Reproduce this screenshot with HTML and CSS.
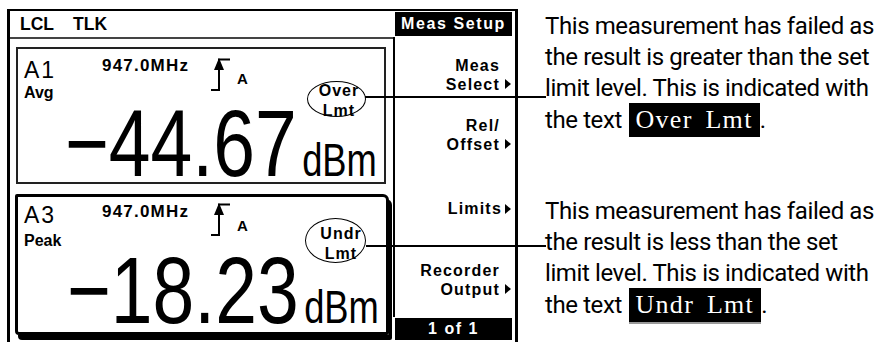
FILE: index.html
```html
<!DOCTYPE html>
<html lang="en">
<head>
<meta charset="utf-8">
<title>Meas Setup - limit indication</title>
<link rel="stylesheet" href="styles.css">
</head>
<body>
<div class="page">
  <div class="screen">
    <div class="main">
      <div class="status"><span>LCL</span><span>TLK</span></div>
      <div class="win win-a">
        <div class="win-head">
          <div class="chan"><div class="chan-id">A1</div><div class="chan-mode">Avg</div></div>
          <div class="freq">947.0MHz</div>
          <div class="trig">
            <svg width="20" height="33" viewBox="0 0 20 33"><path d="M0 32H8V1.5H19" fill="none" stroke="#000" stroke-width="2"/><path d="M8 0L3 12H13Z" fill="#000"/></svg>
            <span class="trig-src">A</span>
          </div>
          <div class="flag">Over<br>Lmt</div>
        </div>
        <div class="reading"><span class="val">&minus;44.67</span><span class="unit">dBm</span></div>
      </div>
      <div class="win win-b">
        <div class="win-head">
          <div class="chan"><div class="chan-id">A3</div><div class="chan-mode">Peak</div></div>
          <div class="freq">947.0MHz</div>
          <div class="trig">
            <svg width="20" height="33" viewBox="0 0 20 33"><path d="M0 32H8V1.5H19" fill="none" stroke="#000" stroke-width="2"/><path d="M8 0L3 12H13Z" fill="#000"/></svg>
            <span class="trig-src">A</span>
          </div>
          <div class="flag">Undr<br>Lmt</div>
        </div>
        <div class="reading"><span class="val">&minus;18.23</span><span class="unit">dBm</span></div>
      </div>
    </div>
    <div class="keys">
      <div class="menu-title">Meas Setup</div>
      <div class="keylist">
        <div class="key key-1"><span class="lbl">Meas<br>Select</span><i class="arr"></i></div>
        <div class="key key-2"><span class="lbl">Rel/<br>Offset</span><i class="arr"></i></div>
        <div class="key key-3"><span class="lbl">Limits</span><i class="arr arr-mid"></i></div>
        <div class="key key-4"><span class="lbl">Recorder<br>Output</span><i class="arr"></i></div>
      </div>
      <div class="page-ind">1 of 1</div>
    </div>
  </div>
  <div class="notes">
    <p class="note note-1">This measurement has failed as<br>the result is greater than the set<br>limit level. This is indicated with<br>the text <span class="hl">Over Lmt</span>.</p>
    <p class="note note-2">This measurement has failed as<br>the result is less than the set<br>limit level. This is indicated with<br>the text <span class="hl hl-shadow">Undr Lmt</span>.</p>
  </div>
  <div class="annot">
    <div class="oval oval-1"></div>
    <div class="oval oval-2"></div>
    <div class="leader leader-1"></div>
    <div class="leader leader-2"></div>
  </div>
</div>
</body>
</html>
```

FILE: styles.css
```css
html, body {
  margin: 0;
  padding: 0;
  background: #fff;
}
body {
  width: 883px;
  height: 342px;
  overflow: hidden;
  font-family: "Liberation Sans", Arial, sans-serif;
  color: #000;
}
.page {
  position: relative;
  display: flex;
  align-items: flex-start;
  height: 342px;
}

/* instrument display */
.screen {
  margin: 9px 0 0 7px;
  width: 505px;
  height: 331px;
  border-top: 2px solid #000;
  border-left: 3px solid #000;
  border-right: 3px solid #000;
  display: flex;
}
.main {
  width: 383px;
  display: flex;
  flex-direction: column;
}
.status {
  height: 26px;
  border-bottom: 2px solid #444;
  padding-left: 10px;
  display: flex;
  gap: 19px;
  font-weight: bold;
  font-size: 17.5px;
  line-height: 26px;
}

.win {
  display: flex;
  flex-direction: column;
  box-sizing: border-box;
}
.win-a {
  margin: 8px 0 0 6px;
  width: 370px;
  height: 137px;
  border: 2px solid #222;
}
.win-b {
  margin: 10px 0 0 5px;
  width: 374px;
  height: 141px;
  border: 3px solid #000;
  border-radius: 2px 6px 2px 4px;
  box-shadow: 3px 5px 0 #000;
}
.win-head {
  display: flex;
  align-items: flex-start;
  padding-left: 6px;
  height: 59px;
}
.win-b .win-head {
  height: 58px;
}
.chan {
  width: 78px;
}
.chan-id {
  font-size: 23px;
  line-height: 23px;
  letter-spacing: 2px;
  margin-top: 10px;
}
.chan-mode {
  font-weight: bold;
  font-size: 16px;
  line-height: 16px;
  margin-top: 3px;
}
.win-b .chan-id { margin-top: 7px; }
.win-b .chan-mode { margin-top: 6px; }
.freq {
  width: 109px;
  font-weight: bold;
  font-size: 17px;
  line-height: 17px;
  letter-spacing: 1.2px;
  margin-top: 8px;
}
.win-b .freq { margin-top: 6px; }
.trig {
  display: flex;
  align-items: flex-start;
  margin-top: 9px;
}
.win-b .trig { margin-top: 6px; }
.trig svg { display: block; }
.trig-src {
  font-weight: bold;
  font-size: 15px;
  line-height: 15px;
  margin: 13px 0 0 6px;
}
.win-b .trig-src { margin-top: 15px; }
.flag {
  margin-left: auto;
  margin-right: 20px;
  width: 50px;
  text-align: center;
  font-weight: bold;
  font-size: 16px;
  line-height: 20px;
  letter-spacing: 1px;
  margin-top: 32px;
}
.win-b .flag { margin-top: 27px; }
.reading {
  display: flex;
  justify-content: flex-end;
  align-items: baseline;
  padding-right: 9px;
  line-height: 70px;
  height: 70px;
  transform: scaleX(0.79);
  transform-origin: right center;
}
.val {
  font-size: 95px;
}
.unit {
  font-size: 46px;
  margin-left: 7px;
}

/* softkeys */
.keys {
  width: 122px;
  display: flex;
  flex-direction: column;
}
.menu-title {
  margin: 1px 3px 0 2px;
  height: 24px;
  background: #000;
  color: #fff;
  font-weight: bold;
  font-size: 16px;
  line-height: 24px;
  letter-spacing: 1.6px;
  text-align: center;
}
.keylist {
  margin-top: 1px;
  border-left: 2px solid #000;
  padding-top: 19px;
  display: flex;
  flex-direction: column;
}
.key {
  display: flex;
  justify-content: flex-end;
  align-items: flex-start;
  padding-right: 4px;
}
.key-1 { height: 60px; }
.key-2 { height: 83px; }
.key-3 { height: 62px; }
.key-4 { height: 56px; }
.key .lbl {
  text-align: right;
  font-weight: bold;
  font-size: 16px;
  line-height: 19px;
  letter-spacing: 1.2px;
}
.arr {
  display: block;
  width: 0;
  height: 0;
  border-left: 6px solid #000;
  border-top: 5px solid transparent;
  border-bottom: 5px solid transparent;
  margin: 23px 0 0 5px;
}
.arr-mid { margin-top: 5px; margin-left: 3px; }
.page-ind {
  margin: 1px 3px 0 2px;
  height: 22px;
  background: #000;
  color: #fff;
  font-weight: bold;
  font-size: 16px;
  line-height: 22px;
  letter-spacing: 1.5px;
  text-align: center;
}

/* notes */
.notes {
  margin-left: 27px;
  width: 345px;
  font-family: Roboto, "Liberation Sans", sans-serif;
  font-size: 24px;
  letter-spacing: -0.4px;
  line-height: 31px;
  white-space: nowrap;
}
.note {
  margin: 0;
}
.note-1 { margin-top: 11px; }
.note-2 { margin-top: 60px; }
.hl {
  background: #000;
  color: #fff;
  font-family: "Liberation Serif", "Times New Roman", serif;
  font-size: 26px;
  letter-spacing: 1.3px;
  word-spacing: 5px;
  padding: 2px 7px 3px 6px;
  margin-left: 2px;
}
.hl-shadow {
  box-shadow: 0 2px 0 #999;
}

/* annotations */
.annot {
  position: absolute;
  inset: 0;
  pointer-events: none;
}
.oval {
  position: absolute;
  border: 1.3px solid #000;
  border-radius: 50%;
  box-sizing: border-box;
}
.oval-1 { left: 307px; top: 81px; width: 59px; height: 36px; }
.oval-2 { left: 305px; top: 218px; width: 61px; height: 45px; }
.leader {
  position: absolute;
  height: 2px;
  background: #000;
}
.leader-1 { left: 365px; top: 96px; width: 181px; }
.leader-2 { left: 366px; top: 245px; width: 180px; }
```
